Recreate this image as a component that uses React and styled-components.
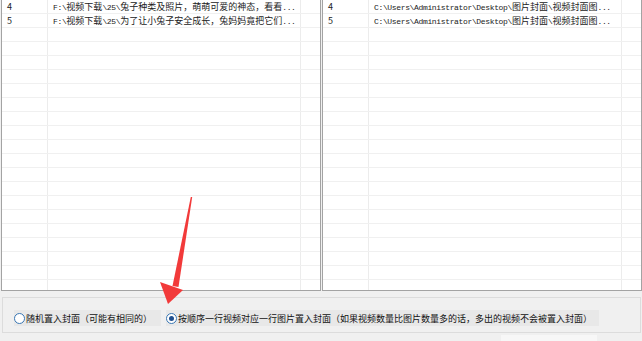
import React from "react";
import styled, { createGlobalStyle } from "styled-components";

const GlobalStyle = createGlobalStyle`
    body {
        margin: 0;
        background: #f0f0f0;
        font-family: "Noto Sans CJK SC", "Noto Sans", sans-serif;
    }
`;

const Page = styled.div`
    position: relative;
    width: 642px;
    height: 341px;
    overflow: hidden;
    background: #f0f0f0;
`;

const Panels = styled.div`
    display: flex;
    gap: 1px;
    padding-left: 1px;
    height: 291px;
`;

const Panel = styled.div`
    width: 320px;
    box-sizing: border-box;
    background: #fff;
    border: 1px solid #a3a3a3;
    border-top: none;
    overflow: hidden;
`;

const Row = styled.div`
    display: grid;
    grid-template-columns: 46px 253px 1fr;
    height: 14px;
    box-sizing: border-box;
    border-bottom: 1px solid #f0f0f0;
`;

const Cell = styled.div`
    box-sizing: border-box;
    padding-left: 5px;
    border-right: ${(p) => (p.$last ? "none" : "1px solid #ececec")};
    font-size: 9px;
    line-height: 13px;
    color: #222;
    white-space: nowrap;
    overflow: hidden;
`;

const Half = styled.span`
    font-family: "Liberation Mono", monospace;
    font-size: 8px;
    letter-spacing: -0.35px;
`;

const Group = styled.div`
    margin: 6px 1px 0 2px;
    height: 36px;
    box-sizing: border-box;
    border: 1px solid #dcdcdc;
    display: flex;
    align-items: flex-start;
    gap: 5px;
    padding: 12px 0 0 11px;
`;

const Option = styled.label`
    display: flex;
    align-items: center;
    gap: 1px;
    height: 16px;
    padding-right: ${(p) => p.$pad}px;
    background: #e8e8e8;
    font-size: 9px;
    color: #111;
    white-space: nowrap;
`;

const Dot = styled.span`
    width: 11px;
    height: 11px;
    box-sizing: border-box;
    border-radius: 50%;
    border: 1px solid #3a78b5;
    background: #fff;
    display: flex;
    align-items: center;
    justify-content: center;
    &::after {
        content: "";
        width: 5px;
        height: 5px;
        border-radius: 50%;
        background: ${(p) => (p.$on ? "#1f4f8f" : "transparent")};
    }
`;

const Footer = styled.div`
    display: flex;
    justify-content: flex-end;
    padding-right: 45px;
    margin-top: 2px;
`;

const Button = styled.div`
    width: 96px;
    height: 10px;
    background: #f7f7f7;
`;

const Overlay = styled.svg`
    position: absolute;
    top: 0;
    left: 0;
    pointer-events: none;
`;

const Mixed = ({ text }) => {
    const runs = text.match(/[\x20-\x7e]+|[^\x20-\x7e]+/g) || [];
    return runs.map((r, i) =>
        /^[\x20-\x7e]/.test(r) ? <Half key={i}>{r}</Half> : <span key={i}>{r}</span>
    );
};

const leftRows = [
    ["4", "F:\\视频下载\\25\\兔子种类及照片，萌萌可爱的神态，看看..."],
    ["5", "F:\\视频下载\\25\\为了让小兔子安全成长，兔妈妈竟把它们..."],
];

const rightRows = [
    ["4", "C:\\Users\\Administrator\\Desktop\\图片封面\\视频封面图..."],
    ["5", "C:\\Users\\Administrator\\Desktop\\图片封面\\视频封面图..."],
];

const List = ({ rows }) => {
    const all = [...rows];
    while (all.length < 21) all.push(["", ""]);
    return (
        <Panel>
            {all.map(([n, path], i) => (
                <Row key={i}>
                    <Cell>{n}</Cell>
                    <Cell><Mixed text={path} /></Cell>
                    <Cell $last />
                </Row>
            ))}
        </Panel>
    );
};

export default function App() {
    return (
        <Page>
            <GlobalStyle />
            <Panels>
                <List rows={leftRows} />
                <List rows={rightRows} />
            </Panels>
            <Group>
                <Option $pad={9}>
                    <Dot />
                    随机置入封面（可能有相同的）
                </Option>
                <Option $pad={7}>
                    <Dot $on />
                    按顺序一行视频对应一行图片置入封面（如果视频数量比图片数量多的话，多出的视频不会被置入封面）
                </Option>
            </Group>
            <Footer>
                <Button />
            </Footer>
            <Overlay width="642" height="341" viewBox="0 0 642 341">
                <polygon points="190.8,197 192.2,197 178.5,287 172.5,286" fill="#f23a3a" />
                <polygon points="160,282 183,290 168,304" fill="#f23a3a" />
            </Overlay>
        </Page>
    );
}
